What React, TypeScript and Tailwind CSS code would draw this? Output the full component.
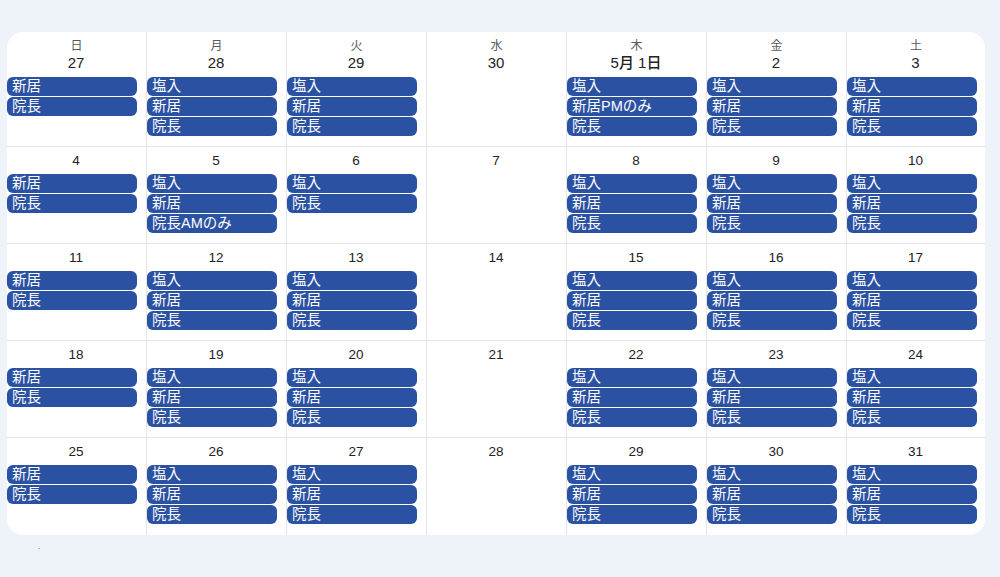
import React from "react";

const S = ["塩入", "新居", "院長"];
const SUN = ["新居", "院長"];

type Cell = { d: string; ev: string[] };

const rows: Cell[][] = [
  [
    { d: "27", ev: SUN },
    { d: "28", ev: S },
    { d: "29", ev: S },
    { d: "30", ev: [] },
    { d: "5月 1日", ev: ["塩入", "新居PMのみ", "院長"] },
    { d: "2", ev: S },
    { d: "3", ev: S },
  ],
  [
    { d: "4", ev: SUN },
    { d: "5", ev: ["塩入", "新居", "院長AMのみ"] },
    { d: "6", ev: ["塩入", "院長"] },
    { d: "7", ev: [] },
    { d: "8", ev: S },
    { d: "9", ev: S },
    { d: "10", ev: S },
  ],
  [
    { d: "11", ev: SUN },
    { d: "12", ev: S },
    { d: "13", ev: S },
    { d: "14", ev: [] },
    { d: "15", ev: S },
    { d: "16", ev: S },
    { d: "17", ev: S },
  ],
  [
    { d: "18", ev: SUN },
    { d: "19", ev: S },
    { d: "20", ev: S },
    { d: "21", ev: [] },
    { d: "22", ev: S },
    { d: "23", ev: S },
    { d: "24", ev: S },
  ],
  [
    { d: "25", ev: SUN },
    { d: "26", ev: S },
    { d: "27", ev: S },
    { d: "28", ev: [] },
    { d: "29", ev: S },
    { d: "30", ev: S },
    { d: "31", ev: S },
  ],
];

const dows = ["日", "月", "火", "水", "木", "金", "土"];

function Chip({ t }: { t: string }) {
  return (
    <div className="h-[19px] w-[130px] rounded-[6px] bg-[#2b51a2] pl-[5px] text-[14.5px] leading-[19px] text-white whitespace-nowrap overflow-hidden">
      {t}
    </div>
  );
}

export default function App() {
  return (
    <div
      className="w-[1000px] h-[577px] bg-[#eef2f9] pt-[32px] pl-[7px]"
      style={{ fontFamily: '"Liberation Sans", Arial, "Noto Sans CJK JP", sans-serif' }}
    >
      <div className="w-[978px] bg-white rounded-[16px] overflow-hidden">
        {rows.map((row, ri) => (
          <div
            key={ri}
            className={
              "grid grid-cols-[repeat(6,140px)_138px] " +
              (ri === 0 ? "h-[115px]" : "h-[97px]") +
              (ri < rows.length - 1 ? " border-b border-[#e2e4e8]" : "")
            }
          >
            {row.map((c, ci) => (
              <div
                key={ci}
                className={
                  "flex flex-col " +
                  (ri === 0 ? "pt-[6px]" : "pt-[5px]") +
                  (ci < 6 ? " border-r border-[#e2e4e8]" : "")
                }
              >
                {ri === 0 && (
                  <div className="h-[16px] text-center text-[12px] leading-[16px] text-[#555a60]">
                    {dows[ci]}
                  </div>
                )}
                <div
                  className={
                    "h-[18px] pr-[1px] text-center leading-[18px] text-[#222] " +
                    (ri === 0 ? "text-[15px] font-medium mb-[5px]" : "text-[13.5px] mb-[4px]")
                  }
                >
                  {c.d}
                </div>
                <div className="flex flex-col gap-[1px]">
                  {c.ev.map((e, i) => (
                    <Chip key={i} t={e} />
                  ))}
                </div>
              </div>
            ))}
          </div>
        ))}
      </div>
      <div className="ml-[31px] mt-[13px] h-[1px] w-[2px] bg-[#b0b4bc]" />
    </div>
  );
}
